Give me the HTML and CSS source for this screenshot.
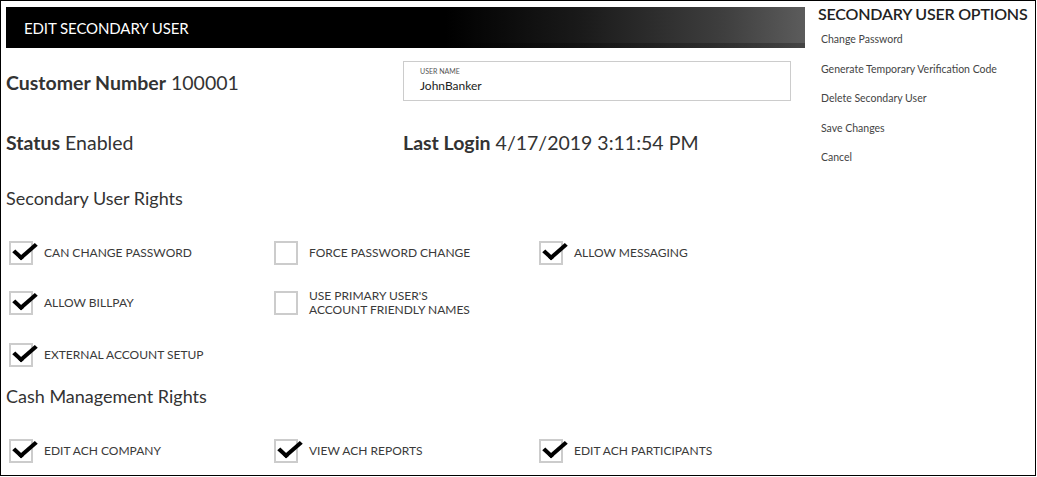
FILE: index.html
```html
<!DOCTYPE html>
<html>
<head>
<meta charset="utf-8">
<link rel="stylesheet" href="styles.css">
</head>
<body>
<div class="frame">
  <main class="main">
    <div class="header">EDIT SECONDARY USER</div>
    <div class="info">
      <div class="info-item row1"><b>Customer Number</b> 100001</div>
      <div class="userbox">
        <div class="ub-label">USER NAME</div>
        <div class="ub-value">JohnBanker</div>
      </div>
      <div class="info-item row2"><b>Status</b> Enabled</div>
      <div class="info-item row2"><b>Last Login</b> 4/17/2019 3:11:54 PM</div>
    </div>
    <h2 class="section">Secondary User Rights</h2>
    <div class="checks">
      <div class="check on"><span class="box"></span><span class="lbl">CAN CHANGE PASSWORD</span></div>
      <div class="check"><span class="box"></span><span class="lbl">FORCE PASSWORD CHANGE</span></div>
      <div class="check on"><span class="box"></span><span class="lbl">ALLOW MESSAGING</span></div>
      <div class="check on"><span class="box"></span><span class="lbl">ALLOW BILLPAY</span></div>
      <div class="check"><span class="box"></span><span class="lbl">USE PRIMARY USER'S<br>ACCOUNT FRIENDLY NAMES</span></div>
      <div class="check empty"></div>
      <div class="check on r3"><span class="box"></span><span class="lbl">EXTERNAL ACCOUNT SETUP</span></div>
    </div>
    <h2 class="section cash">Cash Management Rights</h2>
    <div class="checks cash-checks">
      <div class="check on"><span class="box"></span><span class="lbl">EDIT ACH COMPANY</span></div>
      <div class="check on"><span class="box"></span><span class="lbl">VIEW ACH REPORTS</span></div>
      <div class="check on"><span class="box"></span><span class="lbl">EDIT ACH PARTICIPANTS</span></div>
    </div>
  </main>
  <aside class="side">
    <div class="side-title">SECONDARY USER OPTIONS</div>
    <ul class="opts">
      <li>Change Password</li>
      <li>Generate Temporary Verification Code</li>
      <li>Delete Secondary User</li>
      <li>Save Changes</li>
      <li>Cancel</li>
    </ul>
  </aside>
</div>
</body>
</html>
```
FILE: styles.css
```css
html, body { margin: 0; padding: 0; background: #fff; }
body { font-family: Lato, "Open Sans", sans-serif; color: #333; }
.frame {
  box-sizing: border-box;
  width: 1036px;
  height: 476px;
  border: 1px solid #000;
  display: flex;
  overflow: hidden;
}
.main { width: 804px; flex: none; padding: 6px 0 0 5px; box-sizing: border-box; }
.header {
  height: 41px;
  box-sizing: border-box;
  padding-left: 18px;
  line-height: 42px;
  font-size: 15px;
  color: #fff;
  letter-spacing: -0.1px;
  background:
    linear-gradient(to bottom, rgba(0,0,0,0) 0, rgba(0,0,0,0) 36px, rgba(0,0,0,0.25) 36px),
    linear-gradient(to right, #000 0, #000 55%, #1a1a1a 72%, #3f3f3f 90%, #5c5c5c 100%);
}
.info {
  display: grid;
  grid-template-columns: 397px 388px;
  margin-top: 13px;
}
.info-item { font-size: 19.5px; line-height: 24px; color: #333; }
.info-item b { font-weight: bold; }
.row1 { padding-top: 10px; }
.row2 { margin-top: 30px; }
.userbox {
  height: 40px;
  box-sizing: border-box;
  border: 1px solid #ccc;
  padding: 5px 0 0 16px;
}
.ub-label { font-size: 7px; line-height: 8px; color: #555; }
.ub-value { font-size: 12px; line-height: 16px; color: #222; margin-top: 3px; }
.section {
  font-size: 18px;
  font-weight: normal;
  margin: 31px 0 0 0;
  line-height: 24px;
  color: #333;
}
.checks {
  display: grid;
  grid-template-columns: 265px 265px 265px;
  grid-auto-rows: 24px;
  row-gap: 26px;
  margin-top: 31px;
  padding-left: 3px;
}
.section.cash { margin-top: 19px; }
.checks.cash-checks { margin-top: 31px; }
.check { display: flex; align-items: center; height: 24px; position: relative; }
.check.r3 { margin-top: 2px; }
.box {
  width: 24px; height: 24px;
  box-sizing: border-box;
  border: 2px solid #ccc;
  flex: none;
  position: relative;
}
.check.on .box::after {
  content: "";
  position: absolute;
  width: 8px; height: 18px;
  border-right: 4.5px solid #000;
  border-bottom: 4.5px solid #000;
  transform: rotate(43deg) skewX(-6deg);
  transform-origin: center;
  left: 8px;
  top: -5px;
}
.lbl { font-size: 12px; line-height: 14px; margin-left: 11px; color: #3a3a3a; }
.side { flex: 1; padding: 4px 0 0 13px; }
.side-title { font-size: 16px; font-weight: 600; line-height: 18px; color: #222; letter-spacing: -0.2px; }
.opts { list-style: none; margin: 9px 0 0 3px; padding: 0; }
.opts li { font-size: 10.5px; line-height: 14px; color: #444; margin-bottom: 15.5px; }
```
